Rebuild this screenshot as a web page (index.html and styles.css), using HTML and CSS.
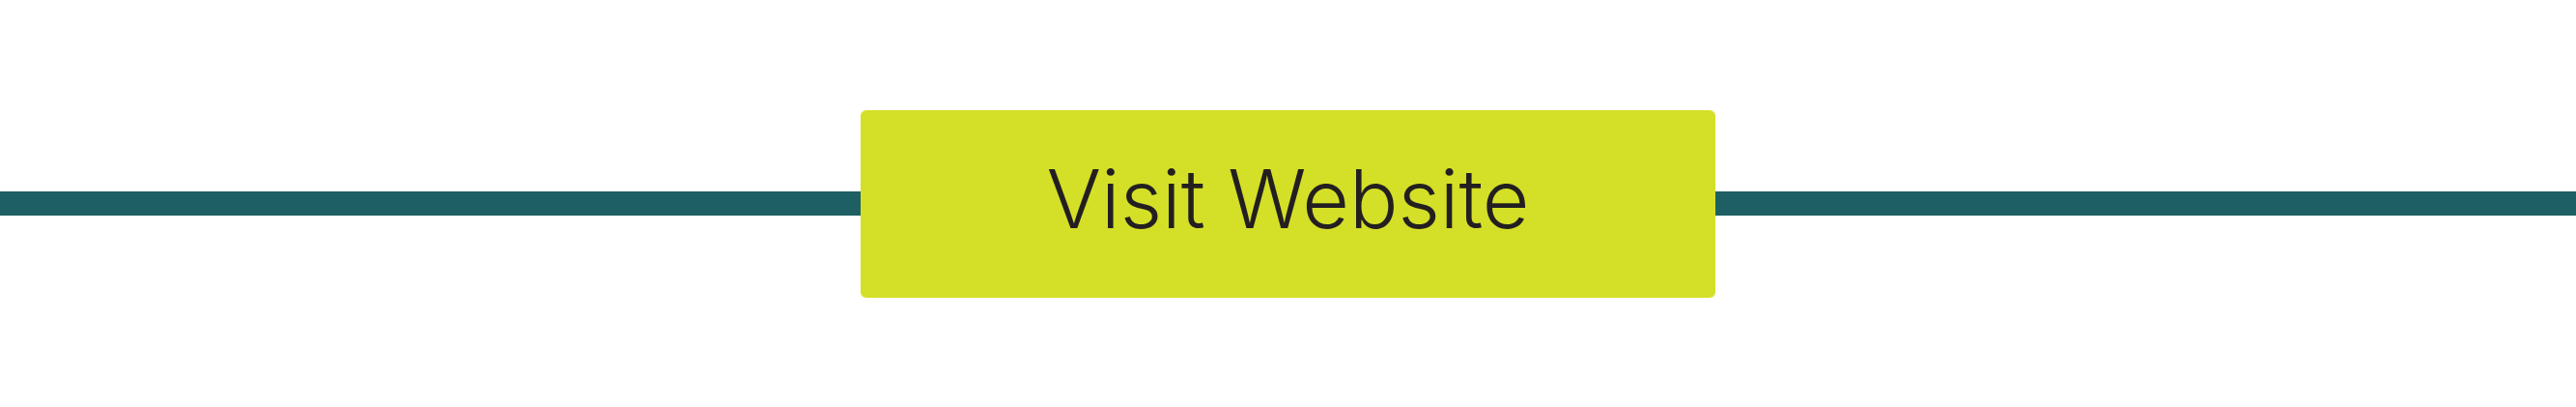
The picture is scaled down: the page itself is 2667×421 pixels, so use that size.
FILE: index.html
```html
<!DOCTYPE html>
<html lang="en">
<head>
<meta charset="utf-8">
<title>Visit Website</title>
<link rel="stylesheet" href="styles.css">
</head>
<body>
<div class="row">
  <div class="rule"></div>
  <a class="cta" href="#">Visit Website</a>
  <div class="rule"></div>
</div>
</body>
</html>
```
FILE: styles.css
```css
html, body {
  margin: 0;
  padding: 0;
  background: #ffffff;
}
.row {
  display: flex;
  align-items: center;
  height: 421px;
  width: 2667px;
}
.rule {
  flex: 1;
  height: 25px;
  background: #1d5f63;
}
.cta {
  width: 885px;
  height: 194px;
  box-sizing: border-box;
  padding-bottom: 10px;
  flex: none;
  display: flex;
  align-items: center;
  justify-content: center;
  background: #d4df27;
  border-radius: 6px;
  color: #231f20;
  text-decoration: none;
  font-family: Inter, "Liberation Sans", sans-serif;
  font-weight: 300;
  font-size: 84px;
  letter-spacing: 0;
}
```
